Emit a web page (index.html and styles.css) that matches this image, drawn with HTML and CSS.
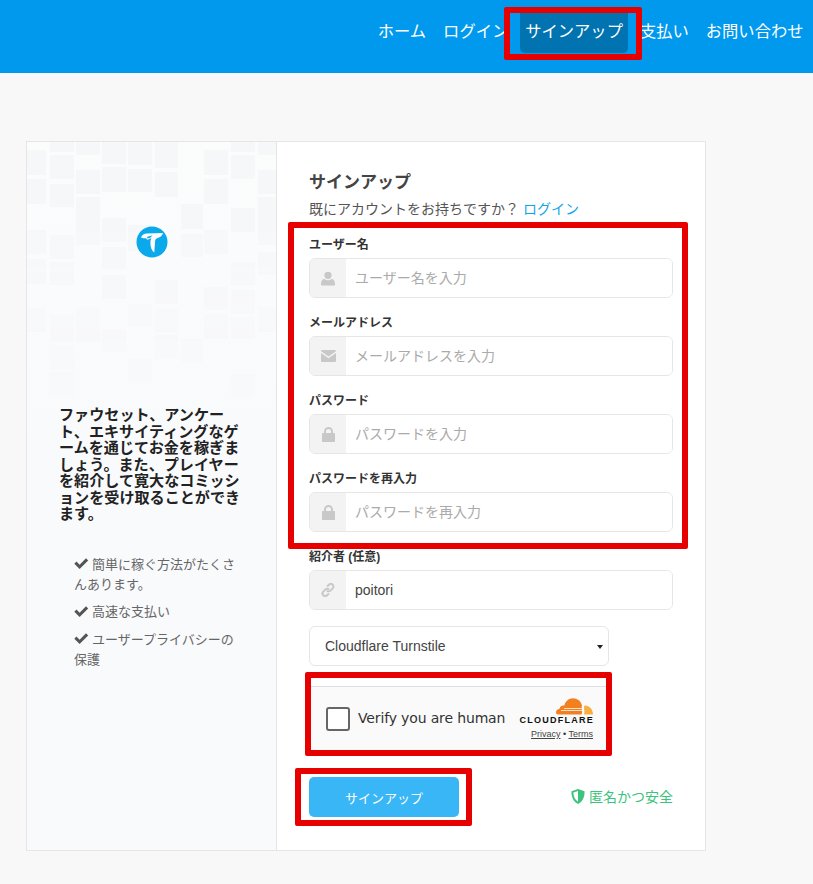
FILE: index.html
```html
<!DOCTYPE html>
<html lang="ja">
<head>
    <meta charset="UTF-8">
    <meta name="viewport" content="width=device-width, initial-scale=1.0">
    <title>サインアップ</title>
    <link rel="stylesheet" href="styles.css">
</head>
<body>
    <header class="topbar">
        <nav class="nav">
            <a href="#">ホーム</a>
            <a href="#">ログイン</a>
            <a href="#" class="active">サインアップ</a>
            <a href="#">支払い</a>
            <a href="#">お問い合わせ</a>
        </nav>
    </header>

    <main class="card">
        <aside class="side">
            <svg class="side-pattern" width="249" height="290" viewBox="0 0 249 290">
                <path d="M0 8h19v25H0zM0 37h19v25H0zM0 88h19v24H0zM0 117h19v25H0zM0 166h19v24H0z"/>
                <path d="M23 0h24v10H23zM23 13h24v24H23zM23 42h24v23H23zM23 93h24v24H23zM23 120h24v23H23zM23 173h24v27H23zM23 203h24v24H23zM23 230h24v23H23z"/>
                <path d="M49 0h24v13H49zM49 28h24v24H49zM49 55h24v48H49zM49 165h24v35H49z"/>
                <path d="M75 0h24v22H75zM75 25h24v25H75zM75 76h24v24H75zM75 105h24v23H75zM75 133h24v24H75zM75 187h24v23H75z"/>
                <path d="M101 0h24v23h-24zM101 27h24v23h-24zM101 83h24v26h-24zM101 162h24v23h-24zM101 217h24v23h-24z"/>
                <path d="M128 0h23v26h-23zM128 30h23v25h-23zM128 138h23v24h-23zM128 167h23v23h-23zM128 193h23v24h-23z"/>
                <path d="M154 62h22v25h-22zM154 92h22v23h-22zM154 197h22v23h-22z"/>
                <path d="M177 8h24v25h-24zM177 37h24v25h-24zM177 88h24v24h-24zM177 145h24v23h-24zM177 172h24v25h-24z"/>
                <path d="M204 0h24v10h-24zM204 13h24v24h-24zM204 66h24v24h-24zM204 120h24v23h-24zM204 148h24v24h-24zM204 175h24v22h-24zM204 232h24v23h-24z"/>
                <path d="M231 0h18v13h-18zM231 28h18v24h-18zM231 55h18v48h-18zM231 110h18v23h-18zM231 165h18v25h-18z"/>
            </svg>
            <svg class="logo" width="32" height="32" viewBox="0 0 32 32">
                <circle cx="16" cy="16" r="15.5" fill="#0aa9ec"/>
                <path fill="#fff" d="M5 11.500C6 9 8 7.700 11 7.600l16-.6c-.7 2.500-2.600 4.300-5.400 5-1.400.4-2.400 1.400-2.500 3l-.8 11.500c-2.500-1.800-3.900-5-3.900-9.500 0-2 .3-3.600.9-5l-3.800 1.700-1.800-1.200 4.200-.4 2.800-2.800-5.200 1.500-.7 1.500C9 12.500 7 12.300 5 11.500z"/>
            </svg>
            <h3 class="side-title">ファウセット、アンケート、エキサイティングなゲームを通じてお金を稼ぎましょう。また、プレイヤーを紹介して寛大なコミッションを受け取ることができます。</h3>
            <ul class="perks">
                <li><svg class="check" viewBox="0 0 14 14"><path d="M.3 7.500 2.400 5.400l3 3L11.600 2.200 13.700 4.300 5.400 12.600z"/></svg> 簡単に稼ぐ方法がたくさんあります。</li>
                <li><svg class="check" viewBox="0 0 14 14"><path d="M.3 7.500 2.400 5.400l3 3L11.600 2.200 13.700 4.300 5.400 12.600z"/></svg> 高速な支払い</li>
                <li><svg class="check" viewBox="0 0 14 14"><path d="M.3 7.500 2.400 5.400l3 3L11.600 2.200 13.700 4.300 5.400 12.600z"/></svg> ユーザープライバシーの保護</li>
            </ul>
        </aside>

        <form class="signup" action="javascript:void(0);">
            <h2>サインアップ</h2>
            <p class="have-account">既にアカウントをお持ちですか？ <a href="#">ログイン</a></p>

            <div class="field">
                <label for="username">ユーザー名</label>
                <div class="input-group">
                    <span class="prefix"><svg width="14" height="15" viewBox="0 0 14 15"><circle cx="7" cy="4.300" r="3.600"/><path d="M.8 14.500c-.6 0-.8-.4-.8-1C0 10.500 1.200 8 3.300 8c1 .8 2.300 1.200 3.700 1.200S9.700 8.800 10.700 8C12.800 8 14 10.500 14 13.500c0 .6-.2 1-.8 1z"/></svg></span>
                    <input type="text" id="username" placeholder="ユーザー名を入力">
                </div>
            </div>
            <div class="field">
                <label for="email">メールアドレス</label>
                <div class="input-group">
                    <span class="prefix"><svg width="15" height="12" viewBox="0 0 15 12"><path d="M0 1.300C0 .5.500 0 1.300 0h12.400c.8 0 1.300.5 1.300 1.300L7.500 6.500zM0 3l7.500 5.200L15 3v7.700c0 .8-.5 1.300-1.300 1.300H1.300C.5 12 0 11.500 0 10.700z"/></svg></span>
                    <input type="email" id="email" placeholder="メールアドレスを入力">
                </div>
            </div>
            <div class="field">
                <label for="password">パスワード</label>
                <div class="input-group">
                    <span class="prefix"><svg width="13" height="15" viewBox="0 0 13 15"><path fill-rule="evenodd" d="M2 6V4.500a4.500 4.500 0 0 1 9 0V6h1c.6 0 1 .4 1 1v7c0 .6-.4 1-1 1H1c-.6 0-1-.4-1-1V7c0-.6.4-1 1-1zm2 0h5V4.500a2.500 2.500 0 0 0-5 0z"/></svg></span>
                    <input type="password" id="password" placeholder="パスワードを入力">
                </div>
            </div>
            <div class="field">
                <label for="password2">パスワードを再入力</label>
                <div class="input-group">
                    <span class="prefix"><svg width="13" height="15" viewBox="0 0 13 15"><path fill-rule="evenodd" d="M2 6V4.500a4.500 4.500 0 0 1 9 0V6h1c.6 0 1 .4 1 1v7c0 .6-.4 1-1 1H1c-.6 0-1-.4-1-1V7c0-.6.4-1 1-1zm2 0h5V4.500a2.500 2.500 0 0 0-5 0z"/></svg></span>
                    <input type="password" id="password2" placeholder="パスワードを再入力">
                </div>
            </div>
            <div class="field">
                <label for="referrer">紹介者 (任意)</label>
                <div class="input-group">
                    <span class="prefix"><svg width="14" height="14" viewBox="0 0 14 14" fill="none" stroke="#c8c8c8" stroke-width="2"><path d="M6 3.500 8 1.700a2.600 2.600 0 0 1 3.700 3.700L9.500 7.600a2.600 2.600 0 0 1-3.700 0"/><path d="M8 10.500 6 12.300a2.600 2.600 0 0 1-3.700-3.700L4.500 6.400a2.600 2.600 0 0 1 3.700 0"/></svg></span>
                    <input type="text" id="referrer" value="poitori">
                </div>
            </div>

            <div class="select-wrap">
                <select class="captcha-select">
                    <option>Cloudflare Turnstile</option>
                </select>
            </div>

            <div class="turnstile">
                <span class="turnstile-box"></span>
                <span class="turnstile-text">Verify you are human</span>
                <div class="cf-brand">
                    <svg class="cf-cloud" width="37" height="17" viewBox="0 0 37 17">
                        <path fill="#f38020" d="M25.500 16.500H2.500C.8 16.500 0 15.700 0 14.500c0-2 1.500-3.500 3.500-3.700C4 8.500 6 7.200 8.200 7.700 9.500 3 13 .3 17 .3c4.500 0 8 3 9 7.200-.3 1.200-.5 2.300-.2 3.500.5 2 .5 4 -.3 5.500z"/>
                        <path fill="#faae40" d="M28 16.500c.6-1.700.5-3.700.1-5.500-.2-1 0-2.200.4-3.500 4.500-.3 8.500 3.500 8.500 9z"/>
                        <path fill="#fff" d="M5 12.200h21v.8H5zM8 10h19v.7H8z"/>
                    </svg>
                    <span class="cf-word">CLOUDFLARE</span>
                    <span class="cf-links"><a href="#">Privacy</a> • <a href="#">Terms</a></span>
                </div>
            </div>

            <div class="actions">
                <button type="submit" class="submit">サインアップ</button>
                <span class="secure"><svg width="14" height="15" viewBox="0 0 14 15"><path fill="#3cc47c" d="M7 0 13.500 2.200C13.800 8 11.500 12.800 7 15 2.500 12.800.2 8 .5 2.200z"/><path fill="#fff" d="M7 2v10.800C4 11 2.500 8 2.400 3.600z"/></svg> 匿名かつ安全</span>
            </div>
        </form>
    </main>

    <!-- red marks drawn on top of the shot -->
    <div class="mark mark-nav"></div>
    <div class="mark mark-fields"></div>
    <div class="mark mark-turnstile"></div>
    <div class="mark mark-button"></div>
</body>
</html>
```

FILE: styles.css
```css
* {margin: 0; padding: 0; box-sizing: border-box;}
html, body {height: 884px; overflow: hidden;}
body {position: relative; background-color: #f8f8f8; color: #333; font-family: 'Liberation Sans', 'Noto Sans CJK JP', sans-serif; font-size: 14px;}
a {text-decoration: none;}
li {list-style-type: none;}

.topbar {height: 73px; background-color: #0099ee; display: flex; justify-content: flex-end; padding-right: 1px;}
.nav {display: flex; align-items: flex-start; padding-top: 12px;}
.nav a {color: #fff; font-size: 16.300px; line-height: 38px; height: 41px; padding: 0 5.500px; margin: 0 3px; border-radius: 0 0 5px 5px;}
.nav a.active {background-color: #0073b0;}

.card {width: 680px; height: 710px; margin: 68px 0 0 26px; background-color: #fff; border: 1px solid #e6e6e6; display: flex;}

.side {position: relative; width: 250px; background: linear-gradient(#fbfcfc, #f9fafc 300px); border-right: 1px solid #e6e6e6; display: flex; flex-direction: column; padding: 84px 32px 0;}
.side-pattern {position: absolute; left: 0; top: 0; fill: #f6f7f9; filter: blur(.5px); -webkit-mask-image: linear-gradient(#000 25%, rgba(0, 0, 0, .35) 90%); mask-image: linear-gradient(#000 25%, rgba(0, 0, 0, .35) 90%);}
.logo {position: relative; display: block; margin-left: 77px;}
.side-title {position: relative; margin-top: 149px; width: 186px; font-size: 15.100px; line-height: 16.500px; font-weight: 700; color: #222;}
.perks {margin: 32px 0 0 15px; width: 166px; font-size: 13px; line-height: 20px; color: #666;}
.perks li {margin-bottom: 7.500px;}
.check {width: 14.500px; height: 14.500px; vertical-align: -2px; fill: #555;}

.signup {flex: 1; padding: 29px 32px 0;}
.signup h2 {font-size: 17px; line-height: 24px; font-weight: 700; color: #444;}
.have-account {margin-top: 2px; line-height: 24px; color: #555;}
.have-account a {color: #12a5ea;}

.field {margin-bottom: 16px; width: 364px;}
.field:first-of-type {margin-top: 15px;}
.field label {display: block; font-size: 12px; line-height: 18px; font-weight: 700; color: #333; margin-bottom: 4px;}
.input-group {display: flex; height: 40px; border: 1px solid #e6e6e6; border-radius: 6px; overflow: hidden;}
.prefix {width: 36px; background-color: #f3f3f3; display: flex; align-items: center; justify-content: center; fill: #c8c8c8;}
.input-group input {flex: 1; min-width: 0; border: 0; padding: 0 9px; font: inherit; color: #444;}
.input-group input:focus {outline: none;}
.input-group input::placeholder {color: #aaa;}

.select-wrap {position: relative; width: 300px;}
.select-wrap::after {content: ''; position: absolute; right: 6px; top: 19px; border: 3px solid transparent; border-top: 4px solid #222; border-bottom: 0;}
.captcha-select {display: block; width: 100%; height: 40px; padding-left: 15px; background-color: #fff; border: 1px solid #e6e6e6; border-radius: 6px; font: inherit; color: #444; appearance: none; -webkit-appearance: none;}

.turnstile {display: flex; align-items: center; width: 300px; height: 65px; margin-top: 20px; padding: 0 16px 0 17px; background-color: #fafafa; border: 1px solid #e0e0e0; border-width: 1px 0 0;}
.turnstile-box {width: 24px; height: 24px; background-color: #fff; border: 2px solid #666; border-radius: 3px;}
.turnstile-text {margin: 0 0 3px 8px; font-family: 'DejaVu Sans', sans-serif; font-size: 14px; letter-spacing: -.150px; color: #333;}
.cf-brand {margin-left: auto; display: flex; flex-direction: column; align-items: flex-end;}
.cf-cloud {display: block;}
.cf-word {font-family: 'Liberation Sans', sans-serif; font-size: 9px; line-height: 11px; font-weight: 700; letter-spacing: 1.250px; margin-right: -1px; color: #111;}
.cf-links {margin-top: 3px; font-size: 9px; line-height: 11px; color: #333;}
.cf-links a {color: #444; text-decoration: underline;}

.actions {display: flex; align-items: center; justify-content: space-between; width: 364px; margin-top: 26px;}
.submit {width: 150px; height: 40px; background-color: #38b6f5; border: 0; border-radius: 5px; color: #fff; font: inherit; font-size: 13px; cursor: pointer;}
.secure {color: #3cc47c; margin-bottom: 2px;}
.secure svg {vertical-align: -2px;}

/* annotation boxes */
.mark {position: absolute; border: 6px solid #e60000; border-radius: 2px;}
.mark-nav {left: 504px; top: 7px; width: 138px; height: 53px;}
.mark-fields {left: 288px; top: 222px; width: 400px; height: 327px;}
.mark-turnstile {left: 305px; top: 672px; width: 307px; height: 84px;}
.mark-button {left: 295px; top: 768px; width: 177px; height: 58px;}
```
